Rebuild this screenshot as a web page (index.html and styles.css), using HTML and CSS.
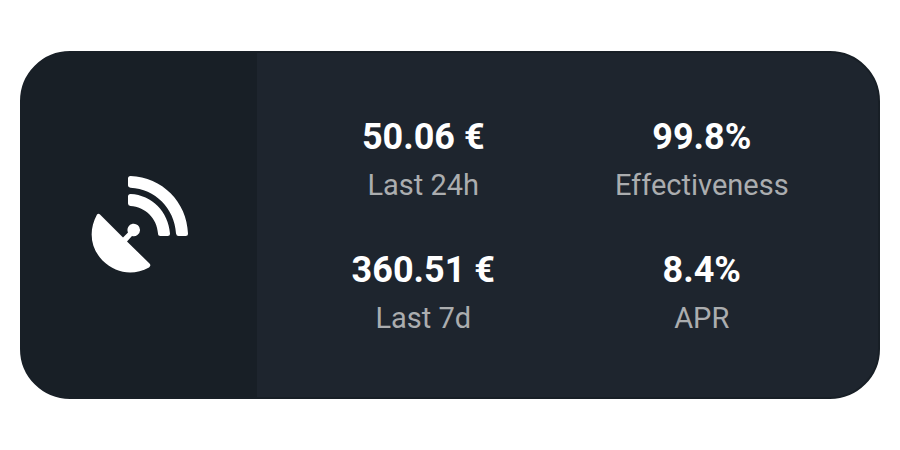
FILE: index.html
```html
<!DOCTYPE html>
<html lang="en">
<head>
<meta charset="utf-8">
<title>Rewards</title>
<link rel="stylesheet" href="styles.css">
</head>
<body>
<main class="card">
  <div class="card-icon">
    <svg class="dish" viewBox="0 0 98 98" fill="currentColor" aria-hidden="true">
      <path d="M6 38.500Q7.500 37 9 38.500L32 61.500L37 56.500A6.300 6.300 0 1 1 41 60L36 65.500L58.500 87.500Q60.500 89.500 58 91.500C42 100 25 97.500 11.500 84.500C-1 71.500-2.500 54 6 38.500Z"/>
      <path d="M39.500 0C71 1 96 26 97 57.500Q97 60 94.500 60H87.500Q85.500 60 85 57.500C83.500 32 64 13 39.500 11.700Q37 11.500 37 9.500V2.500Q37 0 39.500 0Z"/>
      <path d="M39.500 18C61 19 77.500 36 79 57.500Q79 60 76.500 60H69.500Q67 60 67 57.500C66 42 54 31 39.500 30Q37 29.500 37 27.500V20.500Q37 18 39.500 18Z"/>
    </svg>
  </div>
  <dl class="stats">
    <div class="stat"><dt class="label">Last 24h</dt><dd class="value">50.06 €</dd></div>
    <div class="stat"><dt class="label">Effectiveness</dt><dd class="value">99.8%</dd></div>
    <div class="stat"><dt class="label">Last 7d</dt><dd class="value">360.51 €</dd></div>
    <div class="stat"><dt class="label">APR</dt><dd class="value">8.4%</dd></div>
  </dl>
</main>
</body>
</html>
```
FILE: styles.css
```css
* { box-sizing: border-box; }
body {
  margin: 0;
  min-height: 100vh;
  display: grid;
  align-items: center;
  padding: 20px;
  background: #fff;
  font-family: Roboto, sans-serif;
}
.card {
  display: flex;
  overflow: hidden;
  border: 2px solid #181f26;
  border-radius: 50px;
  background: #1e252e;
}
.card-icon {
  flex: 0 0 235px;
  display: grid;
  place-items: center;
  background: #181f26;
  color: #fff;
}
.dish { width: 98px; height: 98px; }
.stats {
  flex: 1;
  display: grid;
  grid-template-columns: 1fr 1fr;
  row-gap: 47px;
  margin: 0;
  padding: 62px 37px 63px 27px;
}
.stat {
  display: flex;
  flex-direction: column-reverse;
  gap: 10px;
  text-align: center;
}
.value {
  margin: 0;
  color: #fff;
  font-size: 36px;
  line-height: 44px;
  font-weight: 700;
}
.label {
  color: #abadaf;
  font-size: 29px;
  line-height: 32px;
}
```
